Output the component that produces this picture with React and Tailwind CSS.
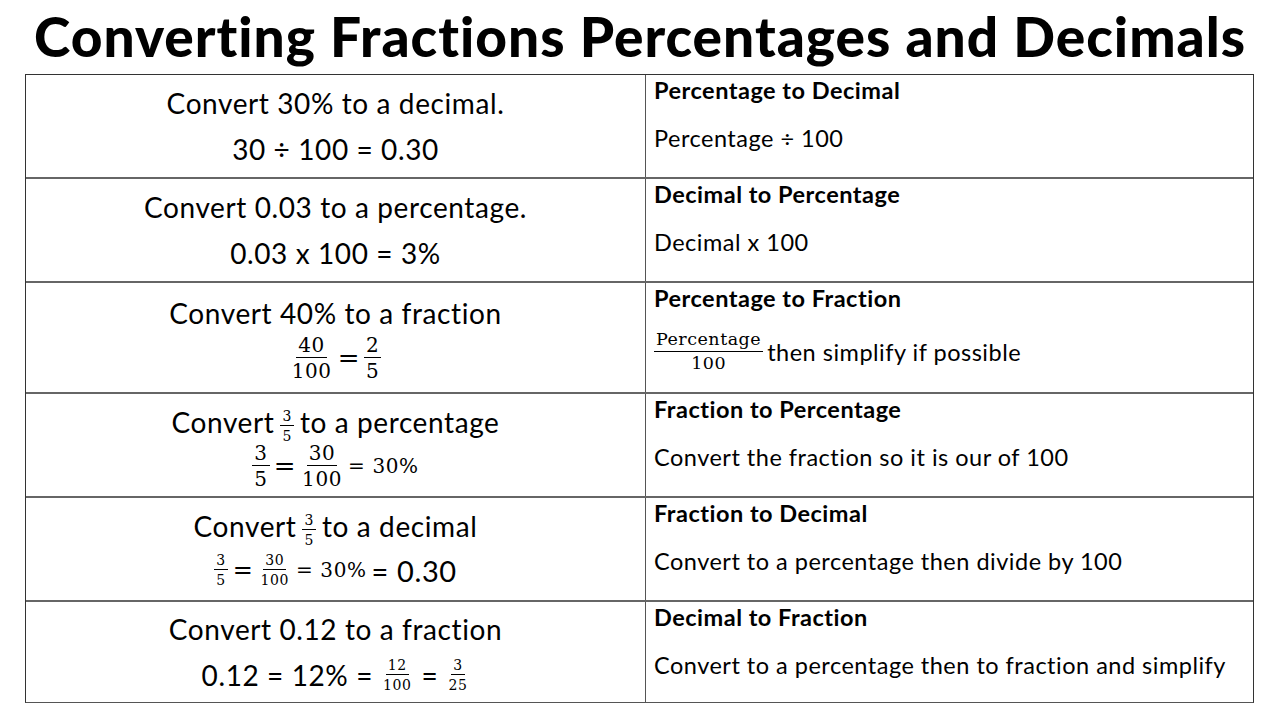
import React from "react";

const sans = { fontFamily: "Lato, 'Open Sans', sans-serif" };
const serif = { fontFamily: "'DejaVu Serif', 'Liberation Serif', serif" };

function Frac({ n, d, size = "text-[20px]", gap = "" }) {
  return (
    <span
      className={`inline-flex flex-col items-center align-middle leading-none ${size} ${gap}`}
      style={serif}
    >
      <span className="px-[2px] pb-[2px] border-b border-black">{n}</span>
      <span className="px-[2px] pt-[3px]">{d}</span>
    </span>
  );
}

function LeftCell({ children }) {
  return (
    <div className="w-[620px] shrink-0 border-r border-[#555] flex flex-col items-center justify-center text-[28px] tracking-[0.6px] text-black">
      {children}
    </div>
  );
}

function RightCell({ title, children }) {
  return (
    <div className="flex-1 pl-[8px] pt-[0px] text-black tracking-[0.5px]">
      <div className="font-bold text-[23.5px] leading-[30px]">{title}</div>
      <div className="text-[23.5px] mt-[18px] leading-[30px] flex items-center">{children}</div>
    </div>
  );
}

export default function App() {
  return (
    <div className="w-[1280px] h-[720px] bg-white overflow-hidden" style={sans}>
      <div className="h-[74px] flex items-center justify-center pb-[2px]">
        <h1 className="text-[55px] font-black leading-none whitespace-nowrap tracking-[1px] text-black" style={sans}>
          Converting Fractions Percentages and Decimals
        </h1>
      </div>
      <div className="ml-[25px] w-[1229px] border border-[#333] border-b-[#555]">
        <div className="flex h-[102px]">
          <LeftCell>
            <div className="leading-[46px]">Convert 30% to a decimal.</div>
            <div className="leading-[46px]">30 ÷ 100 = 0.30</div>
          </LeftCell>
          <RightCell title="Percentage to Decimal">Percentage ÷ 100</RightCell>
        </div>
        <div className="flex h-[104px] border-t-2 border-[#666]">
          <LeftCell>
            <div className="leading-[46px]">Convert 0.03 to a percentage.</div>
            <div className="leading-[46px]">0.03 x 100 = 3%</div>
          </LeftCell>
          <RightCell title="Decimal to Percentage">Decimal x 100</RightCell>
        </div>
        <div className="flex h-[111px] border-t-2 border-[#666]">
          <LeftCell>
            <div className="leading-[38px]">Convert 40% to a fraction</div>
            <div className="flex items-center gap-[4px] mt-[3px]">
              <Frac n="40" d="100" />
              <span className="text-[26px] leading-none" style={serif}>=</span>
              <Frac n="2" d="5" />
            </div>
          </LeftCell>
          <RightCell title="Percentage to Fraction">
            <Frac n="Percentage" d="100" size="text-[17.5px]" />
            <span className="ml-[4px]">then simplify if possible</span>
          </RightCell>
        </div>
        <div className="flex h-[104px] border-t-2 border-[#666]">
          <LeftCell>
            <div className="flex items-center leading-[40px]">
              <span>Convert</span>
              <Frac n="3" d="5" size="text-[14px]" gap="mx-[6px] mt-[8px]" />
              <span>to a percentage</span>
            </div>
            <div className="flex items-center gap-[4px]">
              <Frac n="3" d="5" />
              <span className="text-[26px] leading-none" style={serif}>=</span>
              <Frac n="30" d="100" />
              <span className="text-[20px] leading-none" style={serif}>= 30%</span>
            </div>
          </LeftCell>
          <RightCell title="Fraction to Percentage">Convert the fraction so it is our of 100</RightCell>
        </div>
        <div className="flex h-[104px] border-t-2 border-[#666]">
          <LeftCell>
            <div className="flex items-center leading-[40px] mt-[-6px]">
              <span>Convert</span>
              <Frac n="3" d="5" size="text-[14px]" gap="mx-[6px] mt-[8px]" />
              <span>to a decimal</span>
            </div>
            <div className="flex items-center gap-[5px] mt-[6px]">
              <Frac n="3" d="5" size="text-[14px]" />
              <span className="text-[24px] leading-none" style={serif}>=</span>
              <Frac n="30" d="100" size="text-[14px]" />
              <span className="text-[20px] leading-none" style={serif}>= 30%</span>
              <span className="text-[29px] leading-none">= 0.30</span>
            </div>
          </LeftCell>
          <RightCell title="Fraction to Decimal">Convert to a percentage then divide by 100</RightCell>
        </div>
        <div className="flex h-[102px] border-t-2 border-[#666]">
          <LeftCell>
            <div className="leading-[46px]">Convert 0.12 to a fraction</div>
            <div className="flex items-center gap-[8px] leading-[46px]">
              <span>0.12 = 12% =</span>
              <Frac n="12" d="100" size="text-[14px]" />
              <span>=</span>
              <Frac n="3" d="25" size="text-[14px]" />
            </div>
          </LeftCell>
          <RightCell title="Decimal to Fraction">Convert to a percentage then to fraction and simplify</RightCell>
        </div>
      </div>
    </div>
  );
}
